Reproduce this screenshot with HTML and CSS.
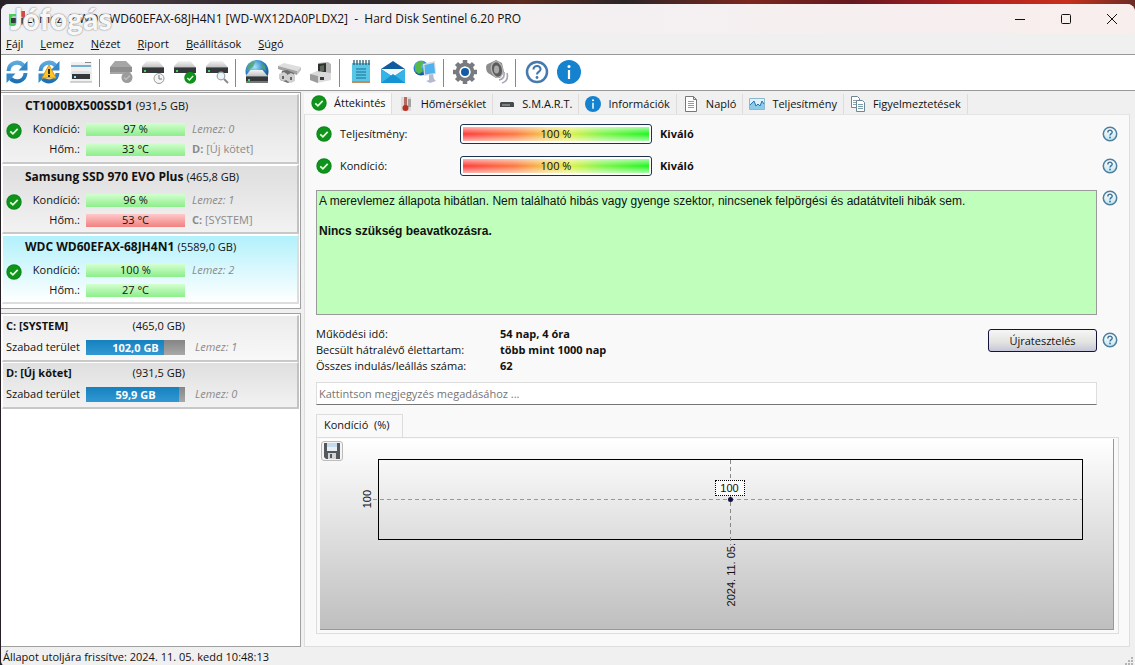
FILE: index.html
```html
<!DOCTYPE html>
<html lang="hu">
<head>
<meta charset="utf-8">
<meta name="viewport" content="width=device-width, initial-scale=1">
<title>Hard Disk Sentinel 6.20 PRO</title>
<link rel="stylesheet" href="styles.css">
</head>
<body>
<svg class="sprite" aria-hidden="true">
  <defs>
    <linearGradient id="g-blue" x1="0" y1="0" x2="0" y2="1"><stop offset="0" stop-color="#5aa9de"/><stop offset="1" stop-color="#1f6fb2"/></linearGradient>
    <linearGradient id="g-lid" x1="0" y1="0" x2="0" y2="1"><stop offset="0" stop-color="#f4f4f4"/><stop offset="1" stop-color="#c4c4c4"/></linearGradient>
    <radialGradient id="g-globe" cx=".4" cy=".3" r=".8"><stop offset="0" stop-color="#a8e6f8"/><stop offset=".5" stop-color="#2b83c8"/><stop offset="1" stop-color="#0a3c78"/></radialGradient>
    <linearGradient id="g-help" x1="0" y1="0" x2="0" y2="1"><stop offset="0" stop-color="#fff"/><stop offset="1" stop-color="#c2e6f2"/></linearGradient>
  </defs>
  <symbol id="i-ok" viewBox="0 0 16 16"><circle cx="8" cy="8" r="7.7" fill="#0b8a1a"/><circle cx="8" cy="8" r="6.6" fill="#10931c"/><path d="M4.3 8.3l2.6 2.5 4.8-5" fill="none" stroke="#e4ffdc" stroke-width="1.7"/></symbol>
  <symbol id="i-help" viewBox="0 0 16 16"><circle cx="8" cy="8" r="6.7" fill="url(#g-help)" stroke="#4f7f9e" stroke-width="1.5"/><path d="M5.8 6.4c0-3 4.5-2.9 4.4-.2C10.200 7.700 8 7.700 8 9.500" fill="none" stroke="#3f7196" stroke-width="1.4"/><circle cx="8" cy="11.500" r=".9" fill="#3f7196"/></symbol>
  <symbol id="i-info" viewBox="0 0 24 24"><circle cx="12" cy="12" r="12" fill="#1482cf"/><circle cx="12" cy="6.500" r="1.500" fill="#fff"/><path d="M12 10v9" stroke="#fff" stroke-width="2.200"/></symbol>
  <symbol id="i-sync" viewBox="0 0 24 24"><path d="M3.500 11C4 3 13 0 18.500 5.500M20.500 13C20 21 11 24 5.500 18.500" fill="none" stroke="url(#g-blue)" stroke-width="4"/><path d="M22.500 1v9.500h-9zM1.500 23v-9.500h9z" fill="#3288c8"/></symbol>
  <symbol id="i-drive" viewBox="0 0 24 24"><path d="M5.500 3h12l5 6h-22z" fill="url(#g-lid)"/><path d="M1 9h22v6H1z" fill="#34383a"/><path d="M1 9h22v1H1z" fill="#6c7274"/><path d="M3 12h2v2H3z" fill="#42d95a"/></symbol>
</svg>

<div class="desktop">
<div class="window">
  <header class="titlebar">
    <svg class="app-icon" viewBox="0 0 16 16" aria-hidden="true"><path d="M0 3h8l2 10-7 3-3-2z" fill="#49cf5b"/><path d="M8 0h8v13l-6 1z" fill="#d84646"/><path d="M2 7h12v5H2z" fill="#383b3d"/><path d="M4 5h8l2 2H2z" fill="#c9c9c9"/></svg>
    <h1 class="title">Lemez: 2 WDC WD60EFAX-68JH4N1 [WD-WX12DA0PLDX2]&nbsp; -&nbsp; Hard Disk Sentinel 6.20 PRO</h1>
    <span class="watermark">Jófogás</span>
    <div class="win-controls">
      <button aria-label="Kis méret"><svg viewBox="0 0 12 12"><path d="M1 6.500h10"/></svg></button>
      <button aria-label="Teljes méret"><svg viewBox="0 0 12 12"><rect x="1.500" y="1.500" width="9" height="9" rx="1"/></svg></button>
      <button aria-label="Bezárás"><svg viewBox="0 0 12 12"><path d="M1 1l10 10M11 1L1 11"/></svg></button>
    </div>
  </header>

  <nav class="menubar">
    <button><u>F</u>ájl</button><button><u>L</u>emez</button><button><u>N</u>ézet</button><button><u>R</u>iport</button><button><u>B</u>eállítások</button><button><u>S</u>úgó</button>
  </nav>

  <div class="toolbar">
    <button aria-label="Frissítés"><svg viewBox="0 0 24 24"><use href="#i-sync"/></svg></button>
    <button aria-label="Újravizsgálat"><svg viewBox="0 0 24 24"><use href="#i-sync"/><path d="M12 5l7 13H5z" fill="#fbc52c" stroke="#d99812"/><path d="M12 9v5M12 15v2" stroke="#222" stroke-width="1.800"/></svg></button>
    <button aria-label="Lemez nézet"><svg viewBox="0 0 24 24"><path d="M2 2h21v20H2z" fill="#f0f0f0"/><path d="M2 6h20" stroke="#4b9cc6" stroke-width="1.500"/><path d="M16 2.500h6" stroke="#8a8a8a"/><path d="M4 11h16l3 3H1z" fill="#e0e0e0"/><path d="M3 14h18v5H3z" fill="#34383a"/><path d="M5 16h2v2H5z" fill="#8de2ff"/><path d="M1 22h22" stroke="#aaa"/></svg></button>
    <span class="sep"></span>
    <button aria-label="Teszt leállítva"><svg viewBox="0 0 24 24"><path d="M6 1h11l6 6v4l-3 3H1V7z" fill="#a6a6a6"/><path d="M1 7h22v5H1z" fill="#8f8f8f"/><circle cx="18" cy="17.500" r="5.500" fill="#9c9c9c"/><path d="M15 17.500l2 2 4-4" fill="none" stroke="#bdbdbd" stroke-width="1.500"/></svg></button>
    <button aria-label="Rövid teszt"><svg viewBox="0 0 24 24"><use href="#i-drive" y="-2" width="24" height="24"/><circle cx="18" cy="18.500" r="5" fill="#f5f5f5" stroke="#9a9a9a"/><path d="M18 15v4h3" fill="none" stroke="#777"/></svg></button>
    <button aria-label="Teljes teszt"><svg viewBox="0 0 24 24"><use href="#i-drive" y="-2" width="24" height="24"/><use href="#i-ok" x="11" y="11.500" width="12.500" height="12.500"/></svg></button>
    <button aria-label="Felületteszt"><svg viewBox="0 0 24 24"><use href="#i-drive" y="-2" width="24" height="24"/><circle cx="16" cy="16" r="3.800" fill="#eef6fa" stroke="#9ba6ae" stroke-width="1.200"/><path d="M19 19l4 4" stroke="#8b8b8b" stroke-width="2"/></svg></button>
    <span class="sep"></span>
    <button aria-label="Hálózati lemez"><svg viewBox="0 0 24 24"><circle cx="12" cy="11.500" r="11.500" fill="url(#g-globe)"/><path d="M3 5q4-4 7-3l-2 5-4 2-2 3q-1-3 1-7zM16 3l4 3 1 5-4-3z" fill="#4fa36a" opacity=".8"/><use href="#i-drive" y="7" width="24" height="24"/><path d="M1 21h22v2H1z" fill="#777"/></svg></button>
    <button aria-label="Lemez műveletek"><svg viewBox="0 0 24 24"><path d="M1 6l6-3 17 4-4 4z" fill="#dedede"/><path d="M1 6l19 5v4L1 9z" fill="#a2a2a2"/><path d="M20 11l4-4v3l-4 5z" fill="#c4c4c4"/><path d="M5 11l5-1 7 3v7l-6 3-8-3z" fill="#6e6e6e"/><path d="M2 14l5-2 3 2v6l-4 1-4-2zM10 15l4-2 4 2v6l-4 2-4-2z" fill="#cfcfcf"/><path d="M6 16v3M14 17v3" stroke="#444" stroke-width="1.500"/></svg></button>
    <button aria-label="Lemez vezérlés"><svg viewBox="0 0 24 24"><path d="M9 3l10-1 3 2v13l-8 3-5-3z" fill="#b5b5b5"/><path d="M9 4l8-1v9l-8 1z" fill="#303030"/><path d="M11 6l4-1v6l-4 1z" fill="#5c665a"/><path d="M1 14l7-3 14 2v7L8 23l-7-3z" fill="#dadada"/><path d="M1 14l8 2v7l-8-3z" fill="#9b9b9b"/><path d="M11 17h4v3h-4z" fill="#3a3a3a"/></svg></button>
    <span class="sep"></span>
    <button aria-label="Jelentés"><svg viewBox="0 0 24 24"><path d="M3 3h18v20H3z" fill="#5ac6e6"/><path d="M3 21h18v2H3z" fill="#c38c58"/><path d="M5 0v5M8 0v5M11 0v5M14 0v5M17 0v5M20 0v5" stroke="#275b70" stroke-width="1.300"/><path d="M7 9h10M7 12h10M7 15h10M7 18h10" stroke="#146f95" stroke-width="1.200"/></svg></button>
    <button aria-label="E-mail küldése"><svg viewBox="0 0 24 24"><path d="M0 9l12-8 12 8v14H0z" fill="#125c9e"/><path d="M0 9h24l-12 8z" fill="#eef8fd"/><path d="M0 9l12 8 12-8v14H0z" fill="#35b4e8"/><path d="M0 23l12-9 12 9z" fill="#1593d2"/></svg></button>
    <button aria-label="Távoli elérés"><svg viewBox="0 0 24 24"><circle cx="8" cy="8" r="7.500" fill="url(#g-globe)"/><path d="M2 4q5-5 9-2L8 7l2 4-4 3-4-3z" fill="#55b848"/><path d="M10 4l12-3 1 13-12 2z" fill="#d9dde4"/><path d="M11.500 5l9.500-2 1 10-10 1.500z" fill="#4fb2ec"/><path d="M16 15l4-1 1 5 2 2-6 2-4-2 3-1z" fill="#b4bad0"/></svg></button>
    <span class="sep"></span>
    <button aria-label="Beállítások"><svg viewBox="0 0 24 24"><circle cx="12" cy="12" r="7.500" fill="none" stroke="#777b80" stroke-width="4"/><path d="M12 0v5M12 19v5M0 12h5M19 12h5M3.500 3.500L7 7M17 17l3.500 3.500M20.500 3.500L17 7M7 17l-3.500 3.500" stroke="#777b80" stroke-width="4.500"/><circle cx="12" cy="12" r="5.500" fill="#fff"/><circle cx="12" cy="12" r="4" fill="#125ca6"/></svg></button>
    <button aria-label="Hangjelzés"><svg viewBox="0 0 24 24"><path d="M1 7q0-3 4-4l6-3 6 3 2 9-4 6-4 0-8-5q-2-2-2-6z" fill="#8c8c8c"/><ellipse cx="12" cy="9.500" rx="5.500" ry="8" transform="rotate(-15 12 9.500)" fill="#5c5c5c" stroke="#b5b5b5" stroke-width="1.300"/><ellipse cx="11.500" cy="9.500" rx="2.600" ry="4" fill="#a9a9a9"/><path d="M14 20q6-1 5-8M17 23q7-2 5-10" fill="none" stroke="#a6a6b4" stroke-width="1.600"/></svg></button>
    <span class="sep"></span>
    <button aria-label="Súgó"><svg viewBox="0 0 24 24"><circle cx="12" cy="12" r="10" fill="#fff" stroke="#4679ae" stroke-width="2.500"/><path d="M8.500 9.500c0-5 7.500-4.500 7 0C15.300 11.700 12 11.700 12 14.500" fill="none" stroke="#4076ae" stroke-width="2.100"/><circle cx="12" cy="17.500" r="1.400" fill="#4076ae"/></svg></button>
    <button aria-label="Névjegy"><svg viewBox="0 0 24 24"><use href="#i-info"/></svg></button>
  </div>

  <div class="workspace">
    <aside class="sidebar">
      <section class="list">
        <article class="disk">
          <h2>CT1000BX500SSD1 <small>(931,5 GB)</small></h2>
          <svg class="ok"><use href="#i-ok"/></svg>
          <span class="label">Kondíció:</span><span class="meter">97 %</span><em>Lemez: 0</em>
          <span class="label">Hőm.:</span><span class="meter">33 °C</span><span class="vol"><b>D:</b> [Új kötet]</span>
        </article>
        <article class="disk">
          <h2>Samsung SSD 970 EVO Plus <small>(465,8 GB)</small></h2>
          <svg class="ok"><use href="#i-ok"/></svg>
          <span class="label">Kondíció:</span><span class="meter">96 %</span><em>Lemez: 1</em>
          <span class="label">Hőm.:</span><span class="meter hot">53 °C</span><span class="vol"><b>C:</b> [SYSTEM]</span>
        </article>
        <article class="disk selected">
          <h2>WDC WD60EFAX-68JH4N1 <small>(5589,0 GB)</small></h2>
          <svg class="ok"><use href="#i-ok"/></svg>
          <span class="label">Kondíció:</span><span class="meter">100 %</span><em>Lemez: 2</em>
          <span class="label">Hőm.:</span><span class="meter">27 °C</span><span class="vol"></span>
        </article>
      </section>
      <section class="list volumes">
        <article class="volume">
          <h2>C: [SYSTEM]</h2><span class="size">(465,0 GB)</span>
          <span class="free">Szabad terület</span><span class="space"><i style="width:79%"></i><b>102,0 GB</b></span><em>Lemez: 1</em>
        </article>
        <article class="volume alt">
          <h2>D: [Új kötet]</h2><span class="size">(931,5 GB)</span>
          <span class="free">Szabad terület</span><span class="space"><i style="width:94%"></i><b>59,9 GB</b></span><em>Lemez: 0</em>
        </article>
      </section>
    </aside>

    <main class="main">
      <div class="tabs" role="tablist">
        <button class="tab active" role="tab" aria-selected="true"><svg viewBox="0 0 16 16"><use href="#i-ok"/></svg>Áttekintés</button>
        <button class="tab" role="tab"><svg viewBox="0 0 16 16"><path d="M3 1h10v14H3z" fill="#dcdcdc"/><path d="M6 1h3v9H6z" fill="#b96a60"/><circle cx="7.500" cy="12" r="3" fill="#b93023"/><path d="M10 4h3M10 6h3M10 8h3M10 10h3" stroke="#666"/></svg>Hőmérséklet</button>
        <button class="tab" role="tab"><svg viewBox="0 0 16 16"><path d="M2 6h12l1 1v4H1V7z" fill="#454a4b"/><path d="M3 9h8" stroke="#bbb"/></svg>S.M.A.R.T.</button>
        <button class="tab" role="tab"><svg viewBox="0 0 16 16"><use href="#i-info"/></svg>Információk</button>
        <button class="tab" role="tab"><svg viewBox="0 0 16 16"><path d="M2.500.5h8l3 3v12h-11zM10.500.5v3h3" fill="#fff" stroke="#777"/><path d="M5 5.500h6M5 7.500h6M5 9.500h6M5 11.500h6" stroke="#999"/></svg>Napló</button>
        <button class="tab" role="tab"><svg viewBox="0 0 16 16"><path d="M.5 2.500h15v11H.5z" fill="#dff1fa" stroke="#8cb8cf"/><path d="M1 13V9l2-2 2-2 2 5 2-2 2 2 2-5 2 3v5z" fill="#8ccaea"/><path d="M1 9l2-2 2-2 2 5 2-2 2 2 2-5 2 3" fill="none" stroke="#2874a8"/></svg>Teljesítmény</button>
        <button class="tab" role="tab"><svg viewBox="0 0 16 16"><path d="M1.500.5h6l2 2v9h-8z" fill="#fff" stroke="#6e8794"/><path d="M3 4.500h4M3 6.500h4M3 8.500h3" stroke="#8ca4b0"/><path d="M6.500 4.500h6l2 2v9h-8z" fill="#fff" stroke="#6e8794"/><path d="M8 8.500h5M8 10.500h5M8 12.500h5" stroke="#7d9cac"/></svg>Figyelmeztetések</button>
      </div>

      <div class="page">
        <div class="score">
          <svg class="ok"><use href="#i-ok"/></svg><span class="name">Teljesítmény:</span>
          <span class="gauge"><span>100 %</span></span><b>Kiváló</b>
          <button class="help" aria-label="Súgó: teljesítmény"><svg viewBox="0 0 16 16"><use href="#i-help"/></svg></button>
        </div>
        <div class="score">
          <svg class="ok"><use href="#i-ok"/></svg><span class="name">Kondíció:</span>
          <span class="gauge"><span>100 %</span></span><b>Kiváló</b>
          <button class="help" aria-label="Súgó: kondíció"><svg viewBox="0 0 16 16"><use href="#i-help"/></svg></button>
        </div>
        <div class="status-row">
          <div class="status-text"><p>A merevlemez állapota hibátlan. Nem található hibás vagy gyenge szektor, nincsenek felpörgési és adatátviteli hibák sem.</p><p><b>Nincs szükség beavatkozásra.</b></p></div>
          <button class="help" aria-label="Súgó: állapot"><svg viewBox="0 0 16 16"><use href="#i-help"/></svg></button>
        </div>
        <div class="stats">
          <dl>
            <dt>Működési idő:</dt><dd>54 nap, 4 óra</dd>
            <dt>Becsült hátralévő élettartam:</dt><dd>több mint 1000 nap</dd>
            <dt>Összes indulás/leállás száma:</dt><dd>62</dd>
          </dl>
          <button class="retest">Újratesztelés</button>
          <button class="help" aria-label="Súgó: újratesztelés"><svg viewBox="0 0 16 16"><use href="#i-help"/></svg></button>
        </div>
        <input class="comment" type="text" aria-label="Megjegyzés" placeholder="Kattintson megjegyzés megadásához ...">
        <div class="chart-tabs"><button class="chart-tab">Kondíció&nbsp; (%)</button></div>
        <div class="chart-frame">
          <div class="chart">
            <button class="save" aria-label="Mentés"><svg viewBox="0 0 16 16"><path d="M0 0h16v16H2l-2-2z" fill="#53585c"/><path d="M3 0h10v8H3z" fill="#c6dced"/><path d="M3 4h10v4H3z" fill="#e9eff3"/><path d="M4 10h8v6H4z" fill="#d4d4d4"/><path d="M6 11h2v4H6z" fill="#53585c"/></svg></button>
            <span class="y-label">100</span>
            <div class="plot">
              <span class="grid-h"></span><span class="grid-v"></span>
              <span class="point-label">100</span><span class="point"></span>
            </div>
            <span class="x-label">2024. 11. 05.</span>
          </div>
        </div>
      </div>
    </main>
  </div>
  <footer class="statusbar">Állapot utoljára frissítve: 2024. 11. 05. kedd 10:48:13
    <svg class="grip" viewBox="0 0 10 10" aria-hidden="true"><path d="M8 2h2v2H8zM8 5h2v2H8zM8 8h2v2H8zM5 5h2v2H5zM5 8h2v2H5zM2 8h2v2H2z"/></svg>
  </footer>
</div>
</div>
</body>
</html>
```
FILE: styles.css
```css
* { box-sizing: border-box; }
body {
  margin: 0;
  font: 12px/16px "Open Sans", "Noto Sans", sans-serif;
  color: #111;
}
button { font: inherit; color: inherit; border: 0; padding: 0; background: none; }
h1, h2, p, dl, dd { margin: 0; font: inherit; }
svg { display: block; }
.sprite { position: absolute; width: 0; height: 0; }

.desktop {
  min-height: 100vh;
  display: flex;
  padding: 4px 0 0 1px;
  background: linear-gradient(90deg, #262126, #4a4048 8%, #352b30 20%, #2d2426 35%, #5d2a1e 46%, #2b2528 55%, #7b271d 66%, #641820 75%, #b01f20 85%, #c8301c 94%, #6a2b25);
}
.window {
  flex: 1;
  min-width: 0;
  display: flex;
  flex-direction: column;
  background: #f0f0f0;
  border-radius: 8px 8px 0 6px;
}

.titlebar {
  position: relative;
  display: flex;
  align-items: center;
  height: 29px;
  padding-left: 8px;
  border-radius: 8px 8px 0 0;
  background: linear-gradient(90deg, #f0f1f4, #f3f0f2 45%, #f8eeed);
}
.app-icon { width: 16px; height: 16px; margin-right: 1px; }
.title { flex: 1; white-space: nowrap; }
.watermark {
  position: absolute;
  left: 9px;
  top: -4px;
  font: 900 30px/36px Lato, sans-serif;
  color: rgba(255, 255, 255, 0.95);
  text-shadow: 0 0 2px #888, 0 0 1px #aaa;
}
.win-controls { display: flex; }
.win-controls button { width: 46px; height: 28px; display: grid; place-items: center; }
.win-controls svg { width: 12px; height: 12px; fill: none; stroke: #111; }

.menubar { display: flex; gap: 17px; height: 21px; padding-left: 5px; align-items: center; font-size: 11px; }

.toolbar {
  display: flex;
  align-items: center;
  height: 37px;
  background: #fff;
  border-top: 1px solid #999;
  border-bottom: 1px solid #999;
}
.toolbar button { width: 32px; height: 32px; display: grid; place-items: center; padding-bottom: 2px; }
.toolbar svg { width: 24px; height: 24px; }
.sep { width: 8px; height: 28px; background: linear-gradient(#888, #888) 2px 0 / 1px 100% no-repeat; }

.workspace { flex: 1; display: flex; min-height: 0; padding-top: 1px; }
.sidebar { flex: 0 0 300px; display: flex; flex-direction: column; gap: 4px; }
.list { background: #fff; border: 1px solid #a0a0a0; border-left: 0; padding: 1px 1px 4px 1px; }
.volumes { flex: 1; }
.disk, .volume {
  display: grid;
  align-items: center;
  border-style: solid;
  border-color: #fff #c2c2c2 #c8c8c8 #fff;
  border-width: 1px 2px 2px 1px;
}
.disk {
  grid-template: 24px 20px 20px / 25px 52px 99px 1fr;
  column-gap: 3px;
  height: 70px;
  background: linear-gradient(#dedede, #f2f2f2);
}
.disk + .disk { border-top-width: 2px; }
.disk h2 { grid-column: 1 / -1; padding: 0 0 3px 22px; font-weight: 700; font-size: 12px; }
.disk small { font-size: 11px; font-weight: 400; }
.ok { width: 16px; height: 16px; }
.disk .ok { grid-area: 2 / 1 / 4 / 2; align-self: start; margin: 4px 0 0 3px; }
.selected { background: linear-gradient(#b2f1fc, #fff); border-color: #fff #ddd #ddd #fff; }
.label { grid-column: 2; text-align: right; padding-right: 3px; font-size: 11px; }
.meter {
  height: 13px;
  line-height: 12px;
  text-align: center;
  font-size: 11px;
  background: linear-gradient(#d4ffd0, #8dee8b);
}
.hot { background: linear-gradient(#ffc9c9, #f18080); }
em, .vol { color: #8a8a8a; padding-left: 4px; font-size: 11px; }
.volume {
  grid-template: 20px 22px / 80px 99px 1fr;
  padding-left: 3px;
  height: 47px;
  font-size: 11px;
  background: linear-gradient(#ececec, #f8f8f8);
}
.alt { background: linear-gradient(#dfdfdf, #f2f2f2); }
.volume h2 { font-weight: 700; }
.volume .size { text-align: right; grid-column: 2 / 3; }
.volume .free { grid-column: 1; }
.volume em { padding-left: 10px; }
.space { position: relative; height: 15px; line-height: 15px; background: linear-gradient(#858585, #a8a8a8); text-align: center; color: #fff; }
.space i { display: block; height: 100%; background: linear-gradient(#1581bf, #3298d2); }
.space b { position: absolute; inset: 0; }

.main { flex: 1; min-width: 0; display: flex; flex-direction: column; padding: 0 5px 0 3px; }
.tabs { display: flex; align-items: flex-end; height: 22px; }
.tab {
  display: flex;
  align-items: center;
  gap: 7px;
  height: 20px;
  padding: 0 6px;
  font-size: 11px;
  white-space: nowrap;
  border-right: 1px solid #ddd;
}
.tab svg { width: 16px; height: 16px; }
.tab.active { height: 22px; margin-bottom: -1px; padding: 0 5px 2px 7px; background: #f9f9f9; }
.page {
  flex: 1;
  display: flex;
  flex-direction: column;
  padding: 3px 10px 12px 11px;
  background: #f9f9f9;
  border: 1px solid #dedede;
  border-top-color: #e4e4e4;
}
.score { display: flex; align-items: center; height: 32px; }
.score .name { flex: none; width: 120px; margin-left: 8px; font-size: 11px; }
.score b { margin-left: 8px; font-size: 11px; }
.score .ok { flex: none; }
.gauge {
  width: 192px;
  height: 20px;
  padding: 2px;
  border: 1px solid #1b3150;
  border-radius: 3px;
  background: #fff;
}
.gauge span {
  display: block;
  height: 14px;
  line-height: 14px;
  text-align: center;
  font-size: 11px;
  background:
    linear-gradient(rgba(255, 255, 255, 0.6), rgba(255, 255, 255, 0) 50%, rgba(255, 255, 255, 0.6)),
    linear-gradient(90deg, #ff3b3b, #fb7a42 28%, #f4c84a 45%, #dcf04a 58%, #7ff54a 75%, #22f522);
}
.help { margin-left: auto; width: 16px; height: 16px; }
.score .help { margin-right: 1px; }
.help svg { width: 16px; height: 16px; }
.status-row { display: flex; gap: 5px; margin: 8px 1px 0 0; }
.status-text {
  flex: 1;
  height: 125px;
  padding: 3px 2px;
  background: #bfffbb;
  border: 1px solid #9a9a9a;
  font: 12px/15px "Liberation Sans", Arial, sans-serif;
}
.status-text p + p { margin-top: 15px; }
.stats { display: flex; gap: 5px; margin: 11px 1px 0 0; }
.stats dl { flex: 1; display: grid; grid-template-columns: 184px 1fr; font-size: 11px; }
.stats dd { font-weight: 700; }
.retest {
  width: 109px;
  height: 23px;
  margin-top: 3px;
  font-size: 11px;
  border: 1px solid #14143a;
  border-radius: 3px;
  background: linear-gradient(#f6f6f6, #e2e2e0 60%, #c6c6da);
}
.stats .help { margin: 6px 0 0; }
.comment {
  height: 23px;
  margin: 8px 22px 0 0;
  padding: 0 2px;
  font: inherit;
  font-size: 11px;
  border: 1px solid #ddd;
  border-bottom-color: #777;
  background: #fff;
}
.comment::placeholder { color: #757575; }
.chart-tabs { display: flex; margin-top: 9px; }
.chart-tab {
  height: 24px;
  margin-bottom: -1px;
  padding: 0 12px 3px 7px;
  font-size: 11px;
  background: #f9f9f9;
  border: 1px solid #ddd;
  border-bottom: 0;
}
.chart-frame { flex: 1; display: flex; padding: 1px 4px 3px 3px; border: 1px solid #ddd; }
.chart {
  flex: 1;
  display: grid;
  grid-template: 20px minmax(81px, 1fr) 89px / 58px minmax(0, 1fr) 30px;
  background: linear-gradient(#fff, #bfbfbf);
  border-right: 1px solid #999;
  border-bottom: 1px solid #999;
  font: 11px/14px "Liberation Sans", Arial, sans-serif;
}
.save { grid-area: 1 / 1; width: 22px; height: 20px; margin: 2px 0 0 1px; padding: 1px; border: 1px solid #bbb; border-radius: 3px; background: #f4f4f4; }
.save svg { width: 16px; height: 16px; margin: auto; }
.y-label, .x-label { writing-mode: vertical-rl; transform: rotate(180deg); }
.y-label { grid-area: 2 / 1; justify-self: end; align-self: center; margin-right: 4px; }
.x-label { grid-area: 3 / 2; justify-self: center; align-self: start; margin-top: 3px; }
.plot { grid-area: 2 / 2; position: relative; border: 1px solid #000; }
.grid-h, .grid-v, .point, .point-label { position: absolute; }
.grid-h { left: -6px; right: 0; bottom: 50%; height: 1px; background: repeating-linear-gradient(90deg, #999 0 4px, transparent 4px 7px); }
.grid-v { top: 0; bottom: -6px; right: 50%; width: 1px; background: repeating-linear-gradient(#888 0 4px, transparent 4px 7px); }
.point { left: calc(50% - 3px); top: calc(50% - 3px); width: 5px; height: 5px; background: #101040; border-radius: 50%; }
.point-label { left: calc(50% - 16px); top: calc(50% - 20px); width: 30px; height: 16px; text-align: center; background: #fafafa; border: 1px dotted #000; }

.statusbar { display: flex; justify-content: space-between; align-items: flex-end; height: 20px; padding: 0 2px 2px; font-size: 11px; }
.grip { width: 10px; height: 10px; fill: #b4b4b4; }
```
